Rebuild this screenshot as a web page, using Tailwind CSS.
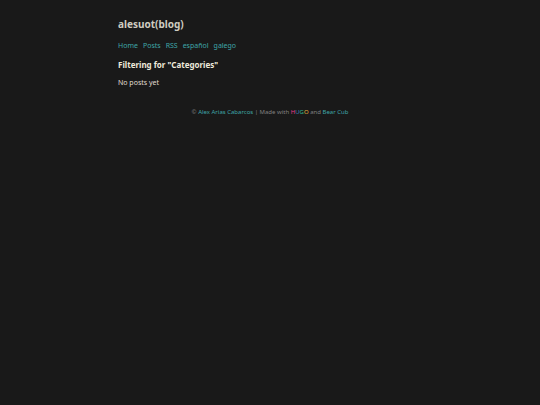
<!DOCTYPE html>
<html lang="en">
<head>
  <meta charset="UTF-8" />
  <meta name="viewport" content="width=device-width, initial-scale=1.0"/>
  <title>Categories | alesuot(blog)</title>
  <script src="https://cdn.jsdelivr.net/npm/@tailwindcss/browser@4"></script>
</head>
<body class="min-h-screen bg-[#191919] font-['Noto_Sans',sans-serif] text-[7px] leading-[10px] text-[#e0ddd2]">
  <div class="max-w-[304px] mx-auto pt-4">
    <!-- Header -->
    <header>
      <a href="/" class="block text-[10px] leading-[16px] font-bold text-[#cfccc0]">alesuot(blog)</a>
      <nav class="flex gap-[5px] mt-[9px] text-[#3fa6a8]">
        <a href="/" class="hover:underline">Home</a>
        <a href="/posts/" class="hover:underline">Posts</a>
        <a href="/index.xml" class="hover:underline">RSS</a>
        <a href="/es/" class="hover:underline">español</a>
        <a href="/gl/" class="hover:underline">galego</a>
      </nav>
    </header>

    <!-- Post list -->
    <main class="mt-[9px]">
      <h1 class="text-[8px] font-bold text-[#eeeadc]">Filtering for "Categories"</h1>
      <p class="mt-2">No posts yet</p>
    </main>

    <!-- Footer -->
    <footer class="mt-5 text-center text-[6px] leading-[8px] text-[#808080]">
      © <a href="/" class="text-[#3fa6a8] hover:underline">Alex Arias Cabarcos</a> | Made with
      <a href="https://gohugo.io/"><span class="text-[#e83c8c]">H</span><span class="text-[#3a80c0]">U</span><span class="text-[#30b090]">G</span><span class="text-[#e0b040]">O</span></a>
      and <a href="https://github.com/clente/hugo-bearcub" class="text-[#3fa6a8] hover:underline">Bear Cub</a>
    </footer>
  </div>
</body>
</html>
